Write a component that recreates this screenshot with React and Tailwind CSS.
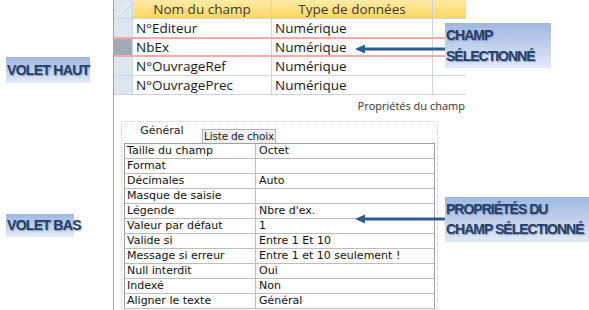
const champs = [
  { nom: "N°Editeur", type: "Numérique" },
  { nom: "NbEx", type: "Numérique", selected: true },
  { nom: "N°OuvrageRef", type: "Numérique" },
  { nom: "N°OuvragePrec", type: "Numérique" },
];

const proprietes = [
  ["Taille du champ", "Octet"],
  ["Format", ""],
  ["Décimales", "Auto"],
  ["Masque de saisie", ""],
  ["Légende", "Nbre d'ex."],
  ["Valeur par défaut", "1"],
  ["Valide si", "Entre 1 Et 10"],
  ["Message si erreur", "Entre 1 et 10 seulement !"],
  ["Null interdit", "Oui"],
  ["Indexé", "Non"],
  ["Aligner le texte", "Général"],
];

const Label = ({ children, className = "" }) => (
  <div
    className={`bg-gradient-to-b from-[#9fb7e1] to-[#e3eaf6] text-[#23406b] font-bold text-[14px] tracking-[-0.7px] whitespace-nowrap [text-shadow:1px_1px_1px_rgba(40,60,100,0.4)] ${className}`}
    style={{ fontFamily: '"Liberation Sans", Arial, sans-serif' }}
  >
    {children}
  </div>
);

const Arrow = ({ className = "" }) => (
  <svg className={className} width="92" height="10" viewBox="0 0 92 10">
    <line x1="8" y1="5" x2="92" y2="5" stroke="#2f5c8f" strokeWidth="3" />
    <polygon points="0,5 10,0.5 10,9.5" fill="#2f5c8f" />
  </svg>
);

export default function App() {
  return (
    <div className="relative w-[589px] h-[310px] bg-white overflow-hidden flex">
      {/* étiquettes gauche */}
      <div className="w-[113px] shrink-0 flex flex-col pl-[6px]">
        <Label className="mt-[57px] w-[84px] h-[26px] flex items-center pl-[1px]">VOLET HAUT</Label>
        <Label className="mt-[131px] w-[68px] h-[23px] flex items-center pl-[1px]">VOLET BAS</Label>
      </div>

      {/* panneau Access */}
      <div className="w-[353px] shrink-0 border-l border-[#a6a6a6] flex flex-col">
        <div style={{ fontFamily: '"Open Sans", "Noto Sans", sans-serif' }} className="text-[13.5px] text-[#1a1a1a]">
          <div className="flex h-[19px] border-b border-[#c9d6e8]">
            <div className="w-[19px] shrink-0 bg-[#dfe5ee] border-r border-[#c9d6e8] relative">
              <svg className="absolute inset-0" width="19" height="19" viewBox="0 0 19 19">
                <line x1="3" y1="17" x2="16" y2="3" stroke="#f4f6fa" strokeWidth="1.5" />
                <line x1="4" y1="17" x2="17" y2="4" stroke="#b7c0cc" strokeWidth="0.8" />
              </svg>
            </div>
            <div className="w-[139px] shrink-0 bg-gradient-to-b from-[#feeba4] to-[#fcd75c] border-r border-[#c9d6e8] flex items-center justify-center text-[#3a3a3a]">
              Nom du champ
            </div>
            <div className="w-[161px] shrink-0 bg-gradient-to-b from-[#feeba4] to-[#fcd75c] border-r border-[#c9d6e8] flex items-center justify-center text-[#3a3a3a]">
              Type de données
            </div>
            <div className="flex-1 bg-gradient-to-b from-[#feeba4] to-[#fcd75c]" />
          </div>
          {champs.map((c) =>
            c.selected ? (
              <div key={c.nom} className="flex h-[20px] -mt-px border-y-2 border-[#f5a9a9]">
                <div className="w-[19px] shrink-0 bg-[#a4aab3] border-r border-[#c9d6e8]" />
                <div className="w-[139px] shrink-0 border-r border-[#c9d6e8] flex items-center pl-[3px]">{c.nom}</div>
                <div className="w-[161px] shrink-0 border-r border-[#c9d6e8] flex items-center pl-[3px]">{c.type}</div>
                <div className="flex-1" />
              </div>
            ) : (
              <div key={c.nom} className="flex h-[19px] border-b border-[#c9d6e8]">
                <div className="w-[19px] shrink-0 bg-[#dfe5ee] border-r border-[#c9d6e8]" />
                <div className="w-[139px] shrink-0 border-r border-[#c9d6e8] flex items-center pl-[3px]">{c.nom}</div>
                <div className="w-[161px] shrink-0 border-r border-[#c9d6e8] flex items-center pl-[3px]">{c.type}</div>
                <div className="flex-1" />
              </div>
            )
          )}
          <div className="text-right text-[11px] text-[#333] leading-[14px] mt-[4px] pr-[1px]">Propriétés du champ</div>
        </div>

        {/* volet bas */}
        <div
          className="ml-[7px] mt-[8px] w-[317px] flex-1 border border-dotted border-[#c9d0db] border-b-0 flex flex-col"
          style={{ fontFamily: '"DejaVu Sans", Tahoma, sans-serif' }}
        >
          <div className="flex items-end h-[21px] text-[11px]">
            <div className="w-[80px] h-[21px] bg-white flex items-center justify-center text-[#222] pb-[2px]">Général</div>
            <div className="w-[74px] h-[14px] bg-[#f0f0f0] border border-b-0 border-[#b5b5b5] flex items-center justify-center text-[#222] leading-none text-[10.5px] whitespace-nowrap tracking-[-0.2px]">
              Liste de choix
            </div>
          </div>
          <div className="ml-[2px] w-[311px] border border-[#a0a0a0] border-b-0 text-[11px] text-[#111]">
            {proprietes.map(([k, v]) => (
              <div key={k} className="flex h-[15px] border-b border-[#bdbdbd]">
                <div className="w-[131px] shrink-0 border-r border-[#bdbdbd] pl-[2px] leading-[14px]">{k}</div>
                <div className="flex-1 pl-[3px] leading-[14px] whitespace-nowrap">{v}</div>
              </div>
            ))}
          </div>
        </div>
      </div>

      {/* annotations */}
      <Arrow className="absolute left-[355px] top-[44px]" />
      <Label className="absolute left-[445px] top-[23px] w-[106px] h-[45px] pl-[1px] pt-[2px] leading-[21px] tracking-[-1px]">
        CHAMP
        <br />
        SÉLECTIONNÉ
      </Label>
      <Arrow className="absolute left-[355px] top-[214px]" />
      <Label className="absolute left-[445px] top-[197px] w-[144px] h-[45px] pl-[1px] pt-[2px] leading-[20px] tracking-[-1px]">
        PROPRIÉTÉS DU
        <br />
        CHAMP SÉLECTIONNÉ
      </Label>
    </div>
  );
}
